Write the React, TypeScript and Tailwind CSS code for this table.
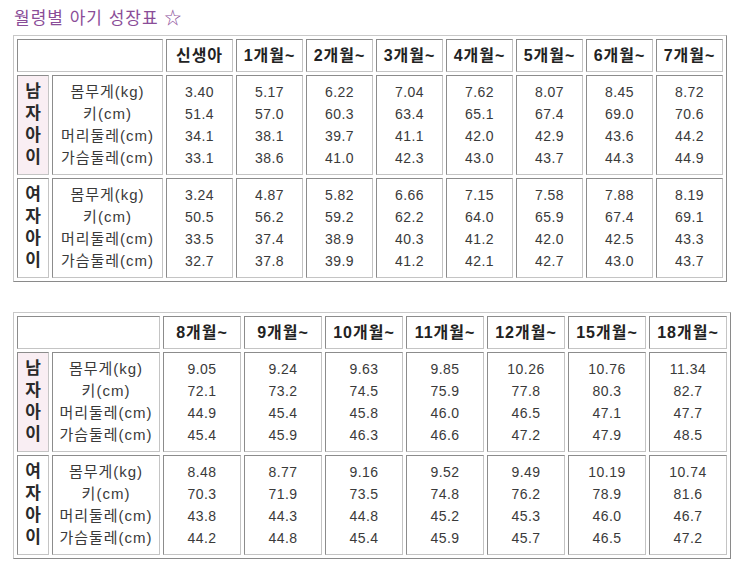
import React from 'react';

type Block = { sex: string[]; rows: string[][] };

const LABELS = ['몸무게(kg)', '키(cm)', '머리둘레(cm)', '가슴둘레(cm)'];

const TABLES: { months: string[]; dataWidth: string; labelWidth: string; blocks: Block[] }[] = [
  {
    months: ['신생아', '1개월~', '2개월~', '3개월~', '4개월~', '5개월~', '6개월~', '7개월~'],
    dataWidth: 'w-[67px]',
    labelWidth: 'w-[111px]',
    blocks: [
      {
        sex: ['남', '자', '아', '이'],
        rows: [
          ['3.40', '5.17', '6.22', '7.04', '7.62', '8.07', '8.45', '8.72'],
          ['51.4', '57.0', '60.3', '63.4', '65.1', '67.4', '69.0', '70.6'],
          ['34.1', '38.1', '39.7', '41.1', '42.0', '42.9', '43.6', '44.2'],
          ['33.1', '38.6', '41.0', '42.3', '43.0', '43.7', '44.3', '44.9'],
        ],
      },
      {
        sex: ['여', '자', '아', '이'],
        rows: [
          ['3.24', '4.87', '5.82', '6.66', '7.15', '7.58', '7.88', '8.19'],
          ['50.5', '56.2', '59.2', '62.2', '64.0', '65.9', '67.4', '69.1'],
          ['33.5', '37.4', '38.9', '40.3', '41.2', '42.0', '42.5', '43.3'],
          ['32.7', '37.8', '39.9', '41.2', '42.1', '42.7', '43.0', '43.7'],
        ],
      },
    ],
  },
  {
    months: ['8개월~', '9개월~', '10개월~', '11개월~', '12개월~', '15개월~', '18개월~'],
    dataWidth: 'w-[78px]',
    labelWidth: 'w-[108px]',
    blocks: [
      {
        sex: ['남', '자', '아', '이'],
        rows: [
          ['9.05', '9.24', '9.63', '9.85', '10.26', '10.76', '11.34'],
          ['72.1', '73.2', '74.5', '75.9', '77.8', '80.3', '82.7'],
          ['44.9', '45.4', '45.8', '46.0', '46.5', '47.1', '47.7'],
          ['45.4', '45.9', '46.3', '46.6', '47.2', '47.9', '48.5'],
        ],
      },
      {
        sex: ['여', '자', '아', '이'],
        rows: [
          ['8.48', '8.77', '9.16', '9.52', '9.49', '10.19', '10.74'],
          ['70.3', '71.9', '73.5', '74.8', '76.2', '78.9', '81.6'],
          ['43.8', '44.3', '44.8', '45.2', '45.3', '46.0', '46.7'],
          ['44.2', '44.8', '45.4', '45.9', '45.7', '46.5', '47.2'],
        ],
      },
    ],
  },
];

const cell =
  'border border-t-[#8c8c8c] border-l-[#8c8c8c] border-r-[#c4c4c4] border-b-[#c4c4c4] text-center align-middle p-0';

const GrowthTable = ({ table }: { table: (typeof TABLES)[number] }) => (
  <table className="table-fixed border-separate border-spacing-[3px] border border-t-[#c8c8c8] border-l-[#c8c8c8] border-r-[#8a8a8a] border-b-[#8a8a8a] bg-white">
    <colgroup>
      <col className="w-[32px]" />
      <col className={table.labelWidth} />
      {table.months.map((m) => (
        <col key={m} className={table.dataWidth} />
      ))}
    </colgroup>
    <thead>
      <tr className="h-[33px]">
        <th colSpan={2} className={cell} />
        {table.months.map((m) => (
          <th key={m} className={`${cell} text-[16px] font-bold text-[#222] tracking-[1px] whitespace-nowrap`}>
            {m}
          </th>
        ))}
      </tr>
    </thead>
    <tbody>
      {table.blocks.map((b, bi) => (
        <tr key={bi} className="h-[100px]">
          <td className={`${cell} ${bi === 0 ? 'bg-[#f9eef3]' : ''} text-[17px] font-bold text-[#2a2a2a] leading-[22px]`}>
            {b.sex.map((s, i) => (
              <div key={i}>{s}</div>
            ))}
          </td>
          <td className={`${cell} text-[15px] text-[#3a3a3a] leading-[22px] tracking-[1px] whitespace-nowrap`}>
            {LABELS.map((l) => (
              <div key={l}>{l}</div>
            ))}
          </td>
          {table.months.map((m, ci) => (
            <td key={m} className={`${cell} text-[14px] text-[#3a3a3a] leading-[22px] tracking-[0.5px]`}>
              {b.rows.map((r, ri) => (
                <div key={ri}>{r[ci]}</div>
              ))}
            </td>
          ))}
        </tr>
      ))}
    </tbody>
  </table>
);

export default function App() {
  return (
    <div
      className="w-[740px] h-[567px] bg-white pl-[13px] pt-[7px]"
      style={{ fontFamily: '"Liberation Sans", "Noto Sans CJK KR", sans-serif' }}
    >
      <h1 className="text-[17px] text-[#8a4d98] leading-[23px] mb-[5px] pl-[1px] tracking-[1px]">
        월령별 아기 성장표 ☆
      </h1>
      <GrowthTable table={TABLES[0]} />
      <div className="h-[30px]" />
      <GrowthTable table={TABLES[1]} />
    </div>
  );
}
